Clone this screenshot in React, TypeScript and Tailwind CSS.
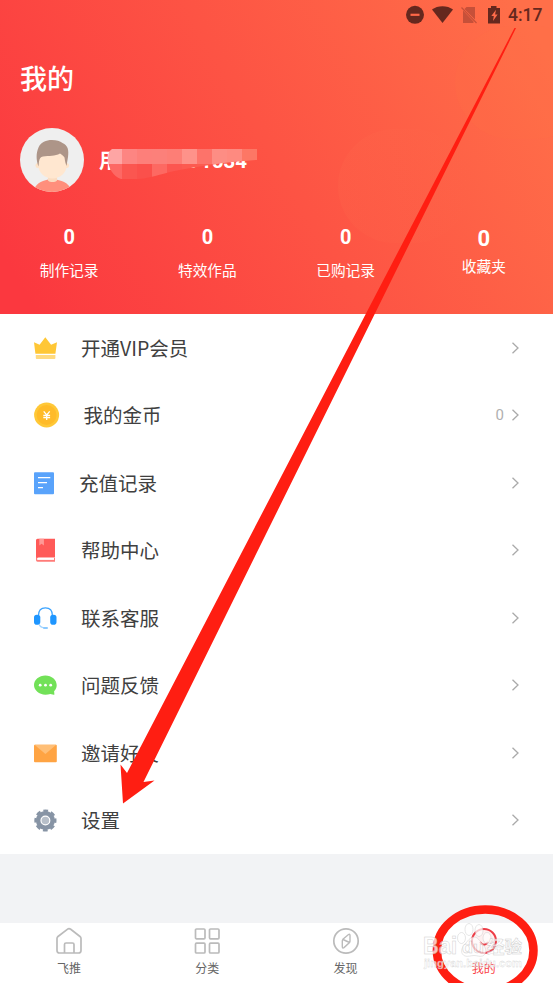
import type { ReactNode } from 'react';

interface MenuItem {
  label: string;
  width: number;
  icon: ReactNode;
  value?: string;
}

const stats = [
  { label: '制作记录', value: '0' },
  { label: '特效作品', value: '0' },
  { label: '已购记录', value: '0' },
];

const menu: MenuItem[] = [
  {
    label: '开通VIP会员',
    width: 30,
    icon: (
      <>
        <path d="M3 9.2l5.6 2.6 5.7-7.6 5.8 7.6L26 9.2l-1.6 11.6H4.4z" fill="#ffc736" />
        <path d="M4.8 22h19.6v3.1a.9.9 0 0 1-.9.9H5.700a.9.9 0 0 1-.9-.9z" fill="#ffda80" />
      </>
    ),
  },
  {
    label: '我的金币',
    width: 32.5,
    value: '0',
    icon: (
      <>
        <circle cx="15.600" cy="15" r="12.500" fill="#ffc837" />
        <circle cx="15.600" cy="15" r="10" fill="#ffbb29" />
        <path d="M12.700 11.400l3 3.600 3-3.600M12.300 15.300h6.800M12.300 17.500h6.800M15.700 15v5" fill="none" stroke="#fff" strokeWidth="1.300" />
      </>
    ),
  },
  {
    label: '充值记录',
    width: 28,
    icon: (
      <>
        <rect x="3" y="4.200" width="20" height="22" rx="1" fill="#59a3fb" />
        <path d="M7 9.700h12.300M7 14.700h9M7 19.700h5" stroke="#fff" strokeWidth="1.200" />
      </>
    ),
  },
  {
    label: '帮助中心',
    width: 30,
    icon: (
      <>
        <path d="M6.500 3.800H24v18.500H7.500L5 25V5.300a1.500 1.500 0 0 1 1.500-1.500z" fill="#ff5a58" />
        <path d="M5 22.500h19v4.200H6.600A1.600 1.600 0 0 1 5 25z" fill="#ff7c79" />
        <rect x="6.200" y="22.900" width="16.800" height="2" fill="#fff" />
        <path d="M8.300 3.800h4.600v6.800l-2.300-1.800-2.300 1.800z" fill="#ff9996" />
      </>
    ),
  },
  {
    label: '联系客服',
    width: 30,
    icon: (
      <>
        <path d="M7.500 12.500C7.500 7.500 10.400 4.900 14.400 4.900s7 2.600 7 7.600" fill="none" stroke="#3aa3ff" strokeWidth="1.200" />
        <rect x="3" y="11.700" width="6.300" height="10" rx="2.800" fill="#1e96ff" />
        <rect x="19.200" y="11.700" width="6.300" height="10" rx="2.800" fill="#1e96ff" />
        <path d="M8 21c.7 2.300 2.200 3.500 5 3.800" fill="none" stroke="#a5d5ff" strokeWidth="1.100" />
        <rect x="12" y="23.900" width="5" height="2" rx="1" fill="#8ccaff" />
      </>
    ),
  },
  {
    label: '问题反馈',
    width: 30,
    icon: (
      <>
        <path d="M14.400 5.500c6.300 0 11.300 4.300 11.300 9.600 0 2.700-1 4.700-2.600 6.200l.3 2.900c0 .4-.2.600-.6.600l-3.500-.8c-1.500.5-3.100.700-4.900.700C8.100 24.700 3 20.400 3 15.100s5.100-9.600 11.400-9.600z" fill="#72e158" />
        <circle cx="9.200" cy="15.200" r="1.400" fill="#fff" />
        <circle cx="14.500" cy="15.200" r="1.400" fill="#fff" />
        <circle cx="19.700" cy="15.200" r="1.400" fill="#fff" />
      </>
    ),
  },
  {
    label: '邀请好友',
    width: 30,
    icon: (
      <>
        <rect x="3" y="6.800" width="22.800" height="17.400" rx="1" fill="#ffa443" />
        <path d="M3.500 6.800h21.800l-10.900 9.200z" fill="#ffbf77" />
      </>
    ),
  },
  {
    label: '设置',
    width: 30,
    icon: (
      <>
        <circle cx="14.400" cy="15.500" r="9.500" fill="#8794a5" />
        <circle cx="14.400" cy="15.500" r="9.200" fill="none" stroke="#8794a5" strokeWidth="3.800" strokeDasharray="4.400 2.825" strokeDashoffset="2.200" strokeLinejoin="round" />
        <circle cx="14.400" cy="15.500" r="4.400" fill="#b7bfc9" stroke="#fff" strokeWidth="1.200" />
      </>
    ),
  },
];

function StatusBar() {
  return (
    <div className="flex h-[30px] justify-end pr-[10px]">
      <svg width="99" height="30" viewBox="404 0 99 30" className="shrink-0">
        <circle cx="416" cy="14.800" r="9" fill="#65281e" />
        <rect x="411.500" y="13.700" width="9" height="2.200" fill="#ff6848" />
        <path d="M433 9.500c5.500-4.500 15.500-4.500 21 0L443.500 23z" fill="#65281e" />
        <path d="M467.500 7H476v12.500L465.500 9zM464 10.500L474.500 21.500V23H464z" fill="#c65039" />
        <path d="M462.500 7.500l15 15.500" stroke="#c65039" strokeWidth="1.200" />
        <path d="M492 6h5.500v2h3.500v15.500H489V8h3z" fill="#65281e" />
        <path d="M497 9.800l-4.700 6.300h2.500l-.8 4.800 4.600-6.400h-2.500z" fill="#ff6b4a" />
      </svg>
      <span className="ml-[6px] w-[35px] whitespace-nowrap font-['Roboto',sans-serif] text-[17.500px] leading-[31px] font-medium text-[#65281e]">4:17</span>
    </div>
  );
}

// Pixelated blocks that hide most of the user name.
const topBlocks = ['#fea5a4', '#fd8582', '#fd7f7a', '#fc807a', '#fd7e76', '#fe928a', '#fd736a', '#fd8d84', '#fe8a80', '#fd7765'];
const lowBlocks = ['#fd6864', '#fb5650', '#fb504b', '#fd6962', '#fc5650', '#fc5a50', '#fc5c50', '#fc5c4e', '#fc5c4e', '#fc5c4e'];

function UserName() {
  return (
    <div className="relative h-[60px] w-[170px] text-[20px] leading-[60px] font-bold text-white">
      <span className="absolute left-0 top-0">用</span>
      <span className="absolute right-[22px] top-[1px] font-['Roboto',sans-serif] text-[20.500px]">91534</span>
      <svg className="absolute left-0 top-0" width="170" height="60" viewBox="99 130 170 60">
        <defs>
          <clipPath id="smear">
            <path d="M112 149H257V160C225 162 195 167 170 172C155 176 145 179 138 179H121C113 176 108 168 108 159Q108 151 112 149z" />
          </clipPath>
        </defs>
        <g clipPath="url(#smear)" shapeRendering="crispEdges">
          {topBlocks.map((c, i) => (
            <rect key={i} x={107 + i * 15} y="149" width="15" height="15" fill={c} />
          ))}
          {lowBlocks.map((c, i) => (
            <rect key={i} x={107 + i * 15} y="164" width="15" height="15" fill={c} />
          ))}
        </g>
      </svg>
    </div>
  );
}

function Avatar() {
  return (
    <svg width="64" height="64" viewBox="0 0 64 64" className="shrink-0">
      <defs>
        <clipPath id="avatar">
          <circle cx="32" cy="32" r="32" />
        </clipPath>
      </defs>
      <g clipPath="url(#avatar)">
        <rect width="64" height="64" fill="#efefef" />
        <path d="M13 64c2-8 8-11 15-12.500h8C44 53 50 56 52 64z" fill="#ff8f7c" />
        <path d="M28 48h9v4.500c-2 2-7 2-9 0z" fill="#fbdcc0" />
        <circle cx="18" cy="37.500" r="2.500" fill="#fee3c8" />
        <circle cx="46.500" cy="37.500" r="2.500" fill="#fee3c8" />
        <path d="M18.500 26h28v12c0 7-7 12.500-14 12.500S18.500 45 18.500 38z" fill="#ffe7d0" />
        <path d="M18.500 38.500C16 32 16 25 18.500 19.500 21 14 26 12 32 12c4.500 0 8 1 10.500 3C48 17.500 49 22 48 29l-1.500 9c-1-2.500-1.500-5-2-8.500-.8-1.500-2.500-2.500-4.500-4-5 3-11 2-17 3-2.500.5-3.500 2-4 5z" fill="#ad9588" />
      </g>
    </svg>
  );
}

function Header() {
  return (
    <header className="relative h-[314px] overflow-hidden bg-[linear-gradient(60deg,#fb383f_5%,#ff6f49_95%)] text-white">
      <div className="absolute left-[338px] top-[129px] h-[114px] w-[132px] rounded-full bg-[linear-gradient(90deg,#ff745024,transparent)]" />
      <div className="absolute left-[455px] top-[26px] h-[113px] w-[136px] rounded-full bg-[#ff754828]" />
      <div className="relative">
        <StatusBar />
        <h1 className="mt-[28px] ml-[20px] text-[27px] leading-[40px] font-medium">我的</h1>
        <div className="mt-[30px] flex h-[64px] items-center gap-[15px] pl-[20px]">
          <Avatar />
          <UserName />
        </div>
        <div className="mt-[30px] grid grid-cols-4 text-center">
          {stats.map((s) => (
            <div key={s.label} className="pt-[1px]">
              <div className="font-['Roboto',sans-serif] text-[20px] leading-[28px] font-bold">{s.value}</div>
              <div className="mt-[8px] text-[14.700px] leading-[22px]">{s.label}</div>
            </div>
          ))}
          <div className="pt-[3px]">
            <div className="font-['Roboto',sans-serif] text-[22px] leading-[28px] font-bold">0</div>
            <div className="mt-[2px] text-[14.700px] leading-[22px]">收藏夹</div>
          </div>
        </div>
      </div>
    </header>
  );
}

function MenuRow({ item }: { item: MenuItem }) {
  return (
    <li className="flex h-[67.500px] items-center pr-[33px] pl-[31px]">
      <svg width={item.width} height="30" viewBox={`0 0 ${item.width} 30`} className="shrink-0">
        {item.icon}
      </svg>
      <span className="ml-[20px] flex-1 text-[19.500px] leading-[28px] text-[#404040]">{item.label}</span>
      {item.value && <span className="mr-[7px] font-['Roboto',sans-serif] text-[15px] text-[#b0b0b0]">{item.value}</span>}
      <svg width="9" height="14" viewBox="0 0 9 14" fill="none" stroke="#aaa" strokeWidth="1.300">
        <path d="M1.500 1.700L7 7l-5.500 5.300" />
      </svg>
    </li>
  );
}

const tabs = [
  {
    label: '飞推',
    icon: (
      <>
        <path d="M2 11.500Q2 10.300 3 9.500L12.300 2.300Q14 1 15.700 2.300L25 9.500Q26 10.300 26 11.500V23.500Q26 26 23.500 26H4.500Q2 26 2 23.500z" />
        <path d="M9.500 26V17.500Q9.500 16 11 16h6.500Q19 16 19 17.500V26" />
      </>
    ),
  },
  {
    label: '分类',
    icon: (
      <>
        <rect x="2.500" y="2" width="9.500" height="9.800" rx="1" />
        <rect x="16.500" y="2" width="9.500" height="9.800" rx="1" />
        <rect x="2.500" y="16.200" width="9.500" height="9.800" rx="1" />
        <rect x="16.500" y="16.200" width="9.500" height="9.800" rx="1" />
      </>
    ),
  },
  {
    label: '发现',
    icon: (
      <>
        <circle cx="14" cy="14" r="12.200" />
        <path d="M16.500 7.500q1.500-.8 1.500 1v5.500q0 1-.7 1.800l-5.300 4.800q-1.700 1-1.700-1v-5.500q0-1 .6-1.800zM11 12.500l6.500 3" strokeWidth="1.400" />
      </>
    ),
  },
  {
    label: '我的',
    active: true,
    icon: (
      <>
        <circle cx="14" cy="14" r="12" fill="#fff0f0" strokeWidth="2" />
        <path d="M10 15q4 5.500 8 0" strokeWidth="2" />
      </>
    ),
  },
];

function TabBar() {
  return (
    <nav className="grid h-[60px] grid-cols-4 bg-white">
      {tabs.map((tab) => (
        <div key={tab.label} className={tab.active ? 'flex flex-col items-center text-[#fa3e45]' : 'flex flex-col items-center text-[#666]'}>
          <svg width="28" height="28" viewBox="0 0 28 28" fill="none" stroke={tab.active ? '#ee3c46' : '#bbb'} strokeWidth="1.700" className="mt-[4px]">
            {tab.icon}
          </svg>
          <span className="mt-[4px] text-[12px] leading-[18px]">{tab.label}</span>
        </div>
      ))}
    </nav>
  );
}

function Annotations() {
  return (
    <svg className="pointer-events-none absolute left-0 top-0" width="553" height="983" viewBox="0 0 553 983">
      <path d="M514.500 28L127 773 120.500 764.500 123 803.500 154.500 780.500 143.500 782 516 28z" fill="#ff1e12" />
      <ellipse cx="485.200" cy="950.500" rx="48.300" ry="41" fill="none" stroke="#ff1e12" strokeWidth="8.500" />
      <g opacity=".72" fill="#fff" stroke="#bdbdbd" strokeWidth=".5">
        <ellipse cx="461.500" cy="938" rx="4" ry="5.500" />
        <ellipse cx="469" cy="929.500" rx="4" ry="6" />
        <ellipse cx="479" cy="930.500" rx="4" ry="6" />
        <ellipse cx="487" cy="938" rx="4" ry="5.500" />
        <path d="M474 937c4 0 5.500 4 8.500 7 4 4 5 10 0 12-3 1-5-.5-8.500-.5s-6 1.500-9 .5c-5-2-4-8 0-12 3-3 5-7 9-7z" />
        <g fontFamily="'Liberation Sans', 'Noto Sans CJK SC', sans-serif" fontWeight="bold">
          <text x="423" y="954" fontSize="23" textLength="34" lengthAdjust="spacingAndGlyphs">Bai</text>
          <text x="462" y="953" fontSize="17" textLength="22" lengthAdjust="spacingAndGlyphs">du</text>
          <text x="487" y="952.500" fontSize="17.500">经验</text>
          <text x="424" y="967" fontSize="11.500" textLength="98" lengthAdjust="spacingAndGlyphs" strokeWidth=".3">jingyan.baidu.com</text>
        </g>
      </g>
    </svg>
  );
}

export default function App() {
  return (
    <div className="relative h-[983px] w-[553px] overflow-hidden bg-[#f2f3f5] font-['Noto_Sans_CJK_SC',sans-serif]">
      <Header />
      <ul className="bg-white">
        {menu.map((item) => (
          <MenuRow key={item.label} item={item} />
        ))}
      </ul>
      <div className="h-[69px]" />
      <TabBar />
      <Annotations />
    </div>
  );
}
